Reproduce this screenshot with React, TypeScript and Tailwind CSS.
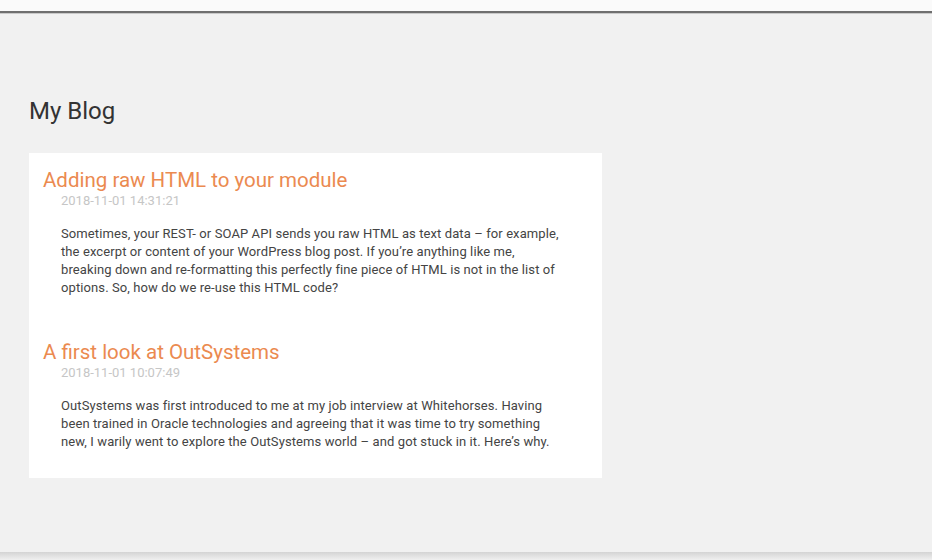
import React from "react";

const posts = [
  {
    title: "Adding raw HTML to your module",
    date: "2018-11-01 14:31:21",
    lines: [
      "Sometimes, your REST- or SOAP API sends you raw HTML as text data \u2013 for example,",
      "the excerpt or content of your WordPress blog post. If you\u2019re anything like me,",
      "breaking down and re-formatting this perfectly fine piece of HTML is not in the list of",
      "options. So, how do we re-use this HTML code?",
    ],
  },
  {
    title: "A first look at OutSystems",
    date: "2018-11-01 10:07:49",
    lines: [
      "OutSystems was first introduced to me at my job interview at Whitehorses. Having",
      "been trained in Oracle technologies and agreeing that it was time to try something",
      "new, I warily went to explore the OutSystems world \u2013 and got stuck in it. Here\u2019s why.",
    ],
  },
];

export default function App() {
  return (
    <div className="w-[932px] h-[560px] flex flex-col bg-[#f1f1f1] font-['Roboto',sans-serif] overflow-hidden">
      <div className="h-[11px] bg-[#fafafa]" />
      <div className="h-[2px] bg-[#6f6f6f]" />
      <div className="h-[1px] bg-[#c9c9c9]" />
      <main className="h-[538px] pt-[81px] pl-[29px]">
        <h1 className="text-[24px] leading-[32px] text-[#333]">My Blog</h1>
        <div className="mt-[26px] w-[573px] bg-white pt-[15px] pb-[27px] pl-[14px] flex flex-col gap-[43px]">
          {posts.map((p) => (
            <div key={p.title} className="flex flex-col">
              <h2 className="text-[20.5px] leading-[24px] text-[#eb8a50]">{p.title}</h2>
              <div className="pl-[18px] text-[13px] leading-[18px] text-[#c6c6c6]">{p.date}</div>
              <p className="mt-[15px] ml-[18px] w-[520px] text-[13px] leading-[18px] tracking-[0.1px] text-[#444]">
                {p.lines.map((l) => (
                  <span key={l} className="block whitespace-nowrap">{l}</span>
                ))}
              </p>
            </div>
          ))}
        </div>
      </main>
      <div className="h-[8px] bg-gradient-to-b from-[#d4d4d4] to-[#f0f0f0]" />
    </div>
  );
}
